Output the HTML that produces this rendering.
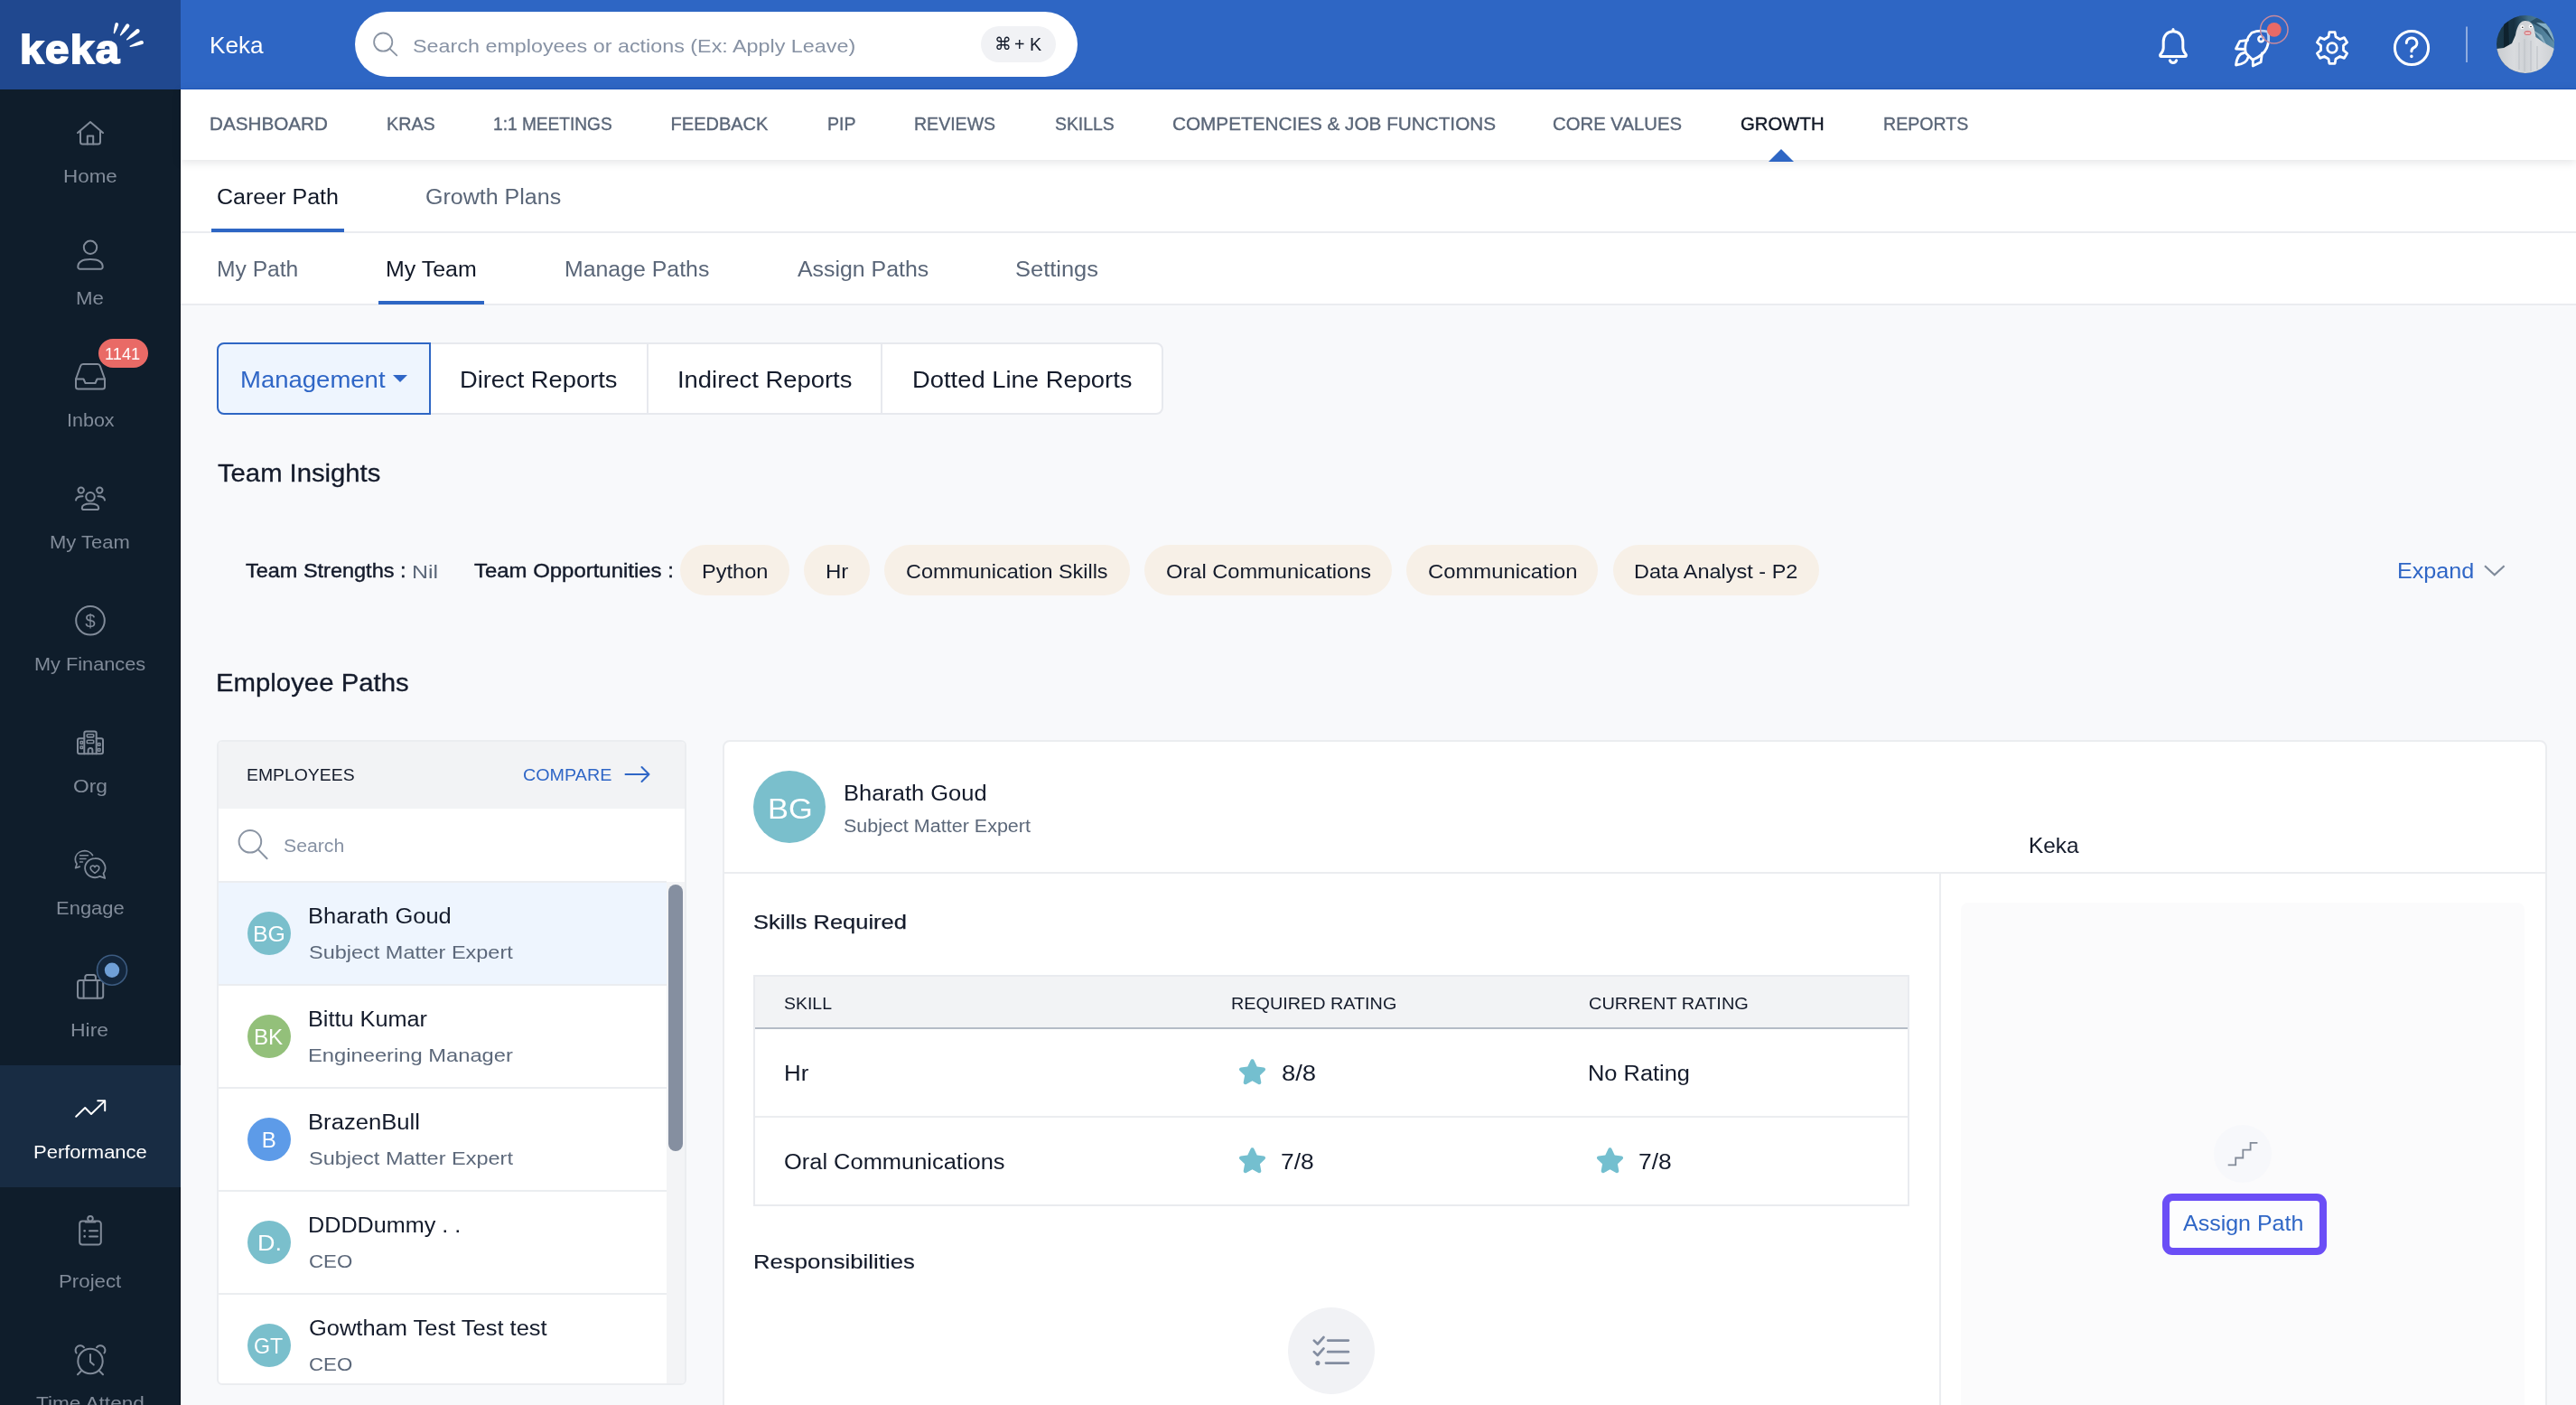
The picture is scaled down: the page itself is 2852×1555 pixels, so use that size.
<!DOCTYPE html>
<html lang="en"><head><meta charset="utf-8"><title>Keka - Career Path - My Team</title>
<style>
*{box-sizing:border-box}
html,body{margin:0;padding:0}
body{width:2852px;height:1555px;overflow:hidden;position:relative;background:#f8f9fb;font-family:"Liberation Sans","DejaVu Sans",sans-serif;color:#141b2b}
.t{position:absolute;line-height:1;white-space:nowrap;margin:0;font-weight:400;transform-origin:0 0}
.abs{position:absolute}
#app{position:absolute;left:0;top:0;width:2852px;height:1555px;overflow:hidden;will-change:transform}
svg{position:absolute;overflow:visible}
.side{position:absolute;left:0;top:0;width:200px;height:1555px;background:#0f1d2b;box-shadow:inset -1px 0 0 #050d18}
.logo{position:absolute;left:0;top:0;width:200px;height:99px;background:#20488f}
.side .act{position:absolute;left:0;top:1179px;width:200px;height:135px;background:#182c43}
.side svg{fill:none;stroke:#818b99;stroke-width:2;stroke-linecap:round;stroke-linejoin:round}
.top{position:absolute;left:200px;top:0;width:2652px;height:99px;background:#2e66c4;box-shadow:inset 0 -1px 0 #1d57c0}
.search{position:absolute;left:193px;top:13px;width:800px;height:72px;border-radius:36px;background:#fff}
.kbd{position:absolute;left:693px;top:16px;width:83px;height:40px;border-radius:20px;background:#f1f2f5}
.nav1{z-index:2;position:absolute;left:200px;top:99px;width:2652px;height:78px;background:#fff;box-shadow:0 2px 10px rgba(20,30,50,.13)}
.tabs2{position:absolute;left:200px;top:177px;width:2652px;height:81px;background:#fff;border-bottom:2px solid #eaecf0}
.tabs3{position:absolute;left:200px;top:258px;width:2652px;height:80px;background:#fff;border-bottom:2px solid #eaecf0}
.ul{position:absolute;height:4px;background:#2e66c4}
.seg{position:absolute;left:240px;top:379px;width:1048px;height:80px;border:2px solid #e7e9ee;border-radius:8px;background:#fff}
.seg i{position:absolute;top:0;width:2px;height:76px;background:#e7e9ee}
.seg .on{position:absolute;left:-2px;top:-2px;width:237px;height:80px;border:2px solid #2e66c4;border-radius:8px 0 0 8px;background:#eef5fe}
.chip{position:absolute;top:603px;height:56px;border-radius:28px;background:#f7f0e7}
.emp{position:absolute;left:240px;top:819px;width:520px;height:714px;border:2px solid #ebedf0;border-radius:6px;background:#fff;overflow:hidden}
.emp .hd{position:absolute;left:0;top:0;width:516px;height:74px;background:#f2f3f5}
.emp .row{position:absolute;left:0;width:496px;height:114px;border-top:2px solid #ebedf0}
.emp .row.sel{background:#eef5fe}
.emp .track{position:absolute;left:496px;top:155px;width:22px;height:560px;background:#f3f4f6}
.emp .thumb{position:absolute;left:498px;top:158px;width:16px;height:295px;border-radius:8px;background:#858fa0}
.av{position:absolute;border-radius:50%;background:#7abfcc}
.det{position:absolute;left:800px;top:819px;width:2020px;height:760px;border:2px solid #ebedf0;border-radius:8px;background:#fff}
.det .hline{position:absolute;left:0;top:144px;width:2016px;height:2px;background:#ebedf0}
.det .vline{position:absolute;left:1345px;top:146px;width:2px;height:620px;background:#ebedf0}
.det .box{position:absolute;left:1369px;top:178px;width:624px;height:600px;border-radius:8px;background:#fbfbfc}
.tbl{position:absolute;left:834px;top:1079px;width:1280px;height:256px;border:2px solid #e9ebef;background:#fff}
.tbl .th{position:absolute;left:0;top:0;width:1276px;height:58px;background:#f2f3f5;border-bottom:2px solid #b5bcc7}
.tbl .sep{position:absolute;left:0;top:154px;width:1276px;height:2px;background:#ebedf0}
.circ{position:absolute;border-radius:50%}
.btn{position:absolute;left:2402px;top:1329px;width:166px;height:52px;border-radius:4px;background:#fdfdfe;box-shadow:0 0 0 8px #6b4ef6}
</style></head>
<body><div id="app">
<aside class="side">
<div class="logo">
<span class="t" style="left:22.3px;top:32px;font-size:45px;font-weight:700;color:#fff;letter-spacing:1.4px;transform:scaleX(1.055);-webkit-text-stroke:1.8px #fff;paint-order:stroke fill;stroke-linejoin:round">keka</span>
<svg width="200" height="99" viewBox="0 0 200 99" style="left:0;top:0"><g fill="#fff" stroke="none"><path d="M127.1 36.7Q129.6 32.3 131.1 27.6A1.9 1.9 0 0 0 127.4 26.5Q126.0 31.2 125.7 36.3A0.7 0.7 0 0 0 127.1 36.7z"/><path d="M134.1 39.2Q139.0 34.9 142.9 29.9A2.2 2.2 0 0 0 139.4 27.2Q135.7 32.4 132.9 38.4A0.7 0.7 0 0 0 134.1 39.2z"/><path d="M140.8 44.4Q147.9 40.7 154.1 35.9A2.4 2.4 0 0 0 151.2 32.2Q145.1 37.2 140.0 43.4A0.7 0.7 0 0 0 140.8 44.4z"/><path d="M144.5 51.9Q151.2 51.0 157.5 49.1A2.1 2.1 0 0 0 156.1 45.1Q149.9 47.2 144.1 50.5A0.7 0.7 0 0 0 144.5 51.9z"/></g></svg>
</div>
<div class="act"></div>
<nav>
<svg width="200" height="1555" viewBox="0 0 200 1555" style="left:0;top:0">
<path d="M86 147L100 135L114 147"/><path d="M89 145.5V157a2.5 2.5 0 0 0 2.5 2.5h17a2.5 2.5 0 0 0 2.5 -2.5V145.5"/><path d="M96.8 159.5V150.5h6.4V159.5"/>
<circle cx="100" cy="273.8" r="7.2"/><path d="M86.3 295.5C86.3 289.5 92 287 100 287S113.7 289.5 113.7 295.5a2.3 2.3 0 0 1 -2.3 2.3H88.6a2.3 2.3 0 0 1 -2.3 -2.3z"/>
<path d="M84 419.5L89.2 405a3 3 0 0 1 2.8 -2h16a3 3 0 0 1 2.8 2L116 419.5V428a2.5 2.5 0 0 1 -2.5 2.5h-27A2.5 2.5 0 0 1 84 428z"/><path d="M84 419.5h8.5l2 4.5h11l2 -4.5H116"/>
<circle cx="100" cy="549.8" r="4.8"/><path d="M90.8 562.3C90.8 559 94.5 557.6 100 557.6s9.2 1.4 9.2 4.7a1.8 1.8 0 0 1 -1.8 1.8H92.6a1.8 1.8 0 0 1 -1.8 -1.8z"/><circle cx="89.7" cy="542.6" r="3.2"/><circle cx="110.3" cy="542.6" r="3.2"/><path d="M84 553.6C84.3 550.6 86.6 549.2 91.5 549.2"/><path d="M116 553.6C115.7 550.6 113.4 549.2 108.5 549.2"/>
<circle cx="100" cy="686.8" r="15.8"/>
<path d="M93.3 834.3V811.5a2 2 0 0 1 2 -2h9.4a2 2 0 0 1 2 2V834.3"/><path d="M93.3 817.2H88a2 2 0 0 0 -2 2V832.3a2 2 0 0 0 2 2H112a2 2 0 0 0 2 -2V819.2a2 2 0 0 0 -2 -2h-5.3"/><path d="M97.6 834.3V830.3a2.4 2.4 0 0 1 4.8 0V834.3"/><rect x="96.3" y="812.7" width="7.4" height="3.2" rx=".8" stroke-width="1.6"/><rect x="96.3" y="819.3" width="7.4" height="3.2" rx=".8" stroke-width="1.6"/><rect x="89" y="820.6" width="2.6" height="2.6" rx=".5" stroke-width="1.5"/><rect x="89" y="826" width="2.6" height="2.6" rx=".5" stroke-width="1.5"/><rect x="108.4" y="822.6" width="2.6" height="2.6" rx=".5" stroke-width="1.5"/><rect x="108.4" y="828.6" width="2.6" height="2.6" rx=".5" stroke-width="1.5"/>
<path d="M102.5 946.5A10.3 9.6 0 0 0 83.3 951c0 2 .7 3.8 1.8 5.3L83.6 960.7l4.6 -1.6" stroke-width="1.7"/><path d="M88.5 946.7h9M88.5 950.4h6.5M88.5 954h3" stroke-width="1.5"/><path d="M105 950.2a11 10.5 0 1 0 5.6 19.6l5.6 2.2l-1.7 -5.2A10.5 10.5 0 0 0 105 950.2z" stroke-width="1.8"/><path d="M105 966.3c-3 -2 -4.8 -3.6 -4.8 -5.6a2.5 2.5 0 0 1 4.8 -1a2.5 2.5 0 0 1 4.8 1c0 2 -1.8 3.6 -4.8 5.6z" stroke-width="1.6"/>
<rect x="86" y="1085" width="28.2" height="19.8" rx="2.5"/><path d="M94.3 1085V1081.3a2.2 2.2 0 0 1 2.2 -2.2h7.2a2.2 2.2 0 0 1 2.2 2.2V1085"/><path d="M92.6 1085V1104.8M107.8 1085V1104.8"/>
<circle cx="124" cy="1073.7" r="16.5" fill="#13263c" stroke="#3c5b80" stroke-width="1.6"/><circle cx="124" cy="1073.7" r="8.2" fill="#6f9fd6" stroke="none"/>
<g stroke="#fff"><path d="M84.2 1235.8L94.2 1226L101 1233L115.8 1218.6"/><path d="M108.2 1218.2H116.2V1229.2"/></g>
<path d="M96 1351.5H91.2a3 3 0 0 0 -3 3V1374.5a3 3 0 0 0 3 3H108.8a3 3 0 0 0 3 -3V1354.500a3 3 0 0 0 -3 -3H104"/><path d="M94.6 1352.6H105.4"/><circle cx="100" cy="1348.8" r="2.8"/><path d="M99 1362.3H108M99 1368.4H108"/><path d="M93.6 1362.3h.1M93.6 1368.4h.1" stroke-width="2.6"/>
<circle cx="100" cy="1506.5" r="13.7"/><path d="M100 1499V1507.3L103.8 1510.6"/><path d="M84.6 1497.5A5.2 5.2 0 0 1 93 1491.300"/><path d="M115.400 1497.5A5.2 5.2 0 0 0 107 1491.3"/><path d="M90 1517.2L86 1521.300M110 1517.2L114 1521.3"/>
</svg>
<svg width="40" height="40" style="left:80px;top:666px"><text x="20" y="27.8" text-anchor="middle" font-size="20.5" fill="#818b99" stroke="none" font-family="Liberation Sans, sans-serif">$</text></svg>
<div class="abs" style="left:109px;top:375px;width:55px;height:32px;border-radius:16px;background:#e96a66"></div>
<span class="t" style="left:116.4px;top:383px;font-size:18.5px;transform:scaleX(0.984);color:#fff;">1141</span>
<span class="t" style="left:69.6px;top:185px;font-size:20.5px;transform:scaleX(1.093);color:#818b99;">Home</span>
<span class="t" style="left:83.7px;top:320px;font-size:20.5px;transform:scaleX(1.086);color:#818b99;">Me</span>
<span class="t" style="left:73.8px;top:455px;font-size:20.5px;transform:scaleX(1.049);color:#818b99;">Inbox</span>
<span class="t" style="left:55.2px;top:590px;font-size:20.5px;transform:scaleX(1.072);color:#818b99;">My Team</span>
<span class="t" style="left:37.6px;top:725px;font-size:20.5px;transform:scaleX(1.060);color:#818b99;">My Finances</span>
<span class="t" style="left:81.1px;top:860px;font-size:20.5px;transform:scaleX(1.111);color:#818b99;">Org</span>
<span class="t" style="left:61.6px;top:995px;font-size:20.5px;transform:scaleX(1.072);color:#818b99;">Engage</span>
<span class="t" style="left:78.4px;top:1130px;font-size:20.5px;transform:scaleX(1.120);color:#818b99;">Hire</span>
<span class="t" style="left:36.6px;top:1265px;font-size:20.5px;transform:scaleX(1.072);color:#fff;">Performance</span>
<span class="t" style="left:64.8px;top:1408px;font-size:20.5px;transform:scaleX(1.086);color:#818b99;">Project</span>
<span class="t" style="left:40.4px;top:1543px;font-size:20.5px;transform:scaleX(1.104);color:#818b99;">Time Attend</span>
</nav></aside>
<header class="top">
<span class="t" style="left:31.6px;top:37px;font-size:26px;transform:scaleX(1.007);color:#fff;">Keka</span>
<div class="search">
<svg width="30" height="30" viewBox="410 32 30 30" style="left:17px;top:19px" fill="none" stroke="#8a94a3" stroke-width="1.8" stroke-linecap="round"><circle cx="424.2" cy="46.600" r="10.100"/><path d="M431.500 53.900L439.300 61.300"/></svg>
<span class="t" style="left:64.2px;top:27px;font-size:21px;transform:scaleX(1.111);color:#8792a4;">Search employees or actions (Ex: Apply Leave)</span>
<div class="kbd">
<span class="t" style="left:15px;top:9.500px;font-size:19px;font-family:'DejaVu Sans',sans-serif;color:#141b2b">&#8984;</span>
<span class="t" style="left:36.6px;top:10px;font-size:20px;transform:scaleX(0.985);color:#141b2b;">+ K</span>
</div></div>
<svg width="460" height="99" viewBox="2380 0 460 99" style="left:2180px;top:0" fill="none" stroke="#fff" stroke-width="3" stroke-linecap="round" stroke-linejoin="round">
<path d="M2406 32.5V34.5"/><path d="M2406 34.8c-6.600 0 -10.800 4.800 -10.800 11.500V53c0 3 -1.500 5.200 -3.300 7.300c-.8 1 -.2 2.300 1.100 2.300H2419c1.300 0 1.900 -1.300 1.100 -2.300c-1.800 -2.100 -3.300 -4.300 -3.300 -7.300V46.300c0 -6.700 -4.200 -11.500 -10.800 -11.500z"/><path d="M2402.300 66.800a3.900 3.900 0 0 0 7.400 0"/>
<path d="M2493 36.200c6.500 -2.600 12.500 -2.400 17.800 -1.100c1.300 5.300 1.500 11.300 -1.100 17.800c-2.700 6.300 -8.700 10.500 -15.700 13.300l-7.300 -7.300c-2.800 -7 1 -17.500 6.300 -22.700z" stroke-width="2.800"/><circle cx="2503.300" cy="43.200" r="2.900" stroke-width="2.600"/><path d="M2488.500 44.500l-8.700 1.200l-4.300 8.300l9.800 .5" stroke-width="2.800"/><path d="M2494.300 66v7l8.800 -4.300l1.300 -9.700" stroke-width="2.800"/><path d="M2484.500 58.500c-5.500 .5 -8 5 -9 13.500c8.500 -1 12.500 -3.500 13.500 -8.800" stroke-width="2.800"/>
<circle cx="2517.800" cy="32.800" r="15.200" fill="rgba(46,102,196,.3)" stroke="#c98a9d" stroke-width="1.500"/><circle cx="2517.800" cy="32.800" r="7.900" fill="#e96a66" stroke="none"/>
<path d="M2578.9 35.7L2585.1 35.7L2586.0 40.8L2590.6 43.5L2595.4 41.6L2598.6 47.0L2594.5 50.3L2594.5 55.7L2598.6 59.0L2595.4 64.4L2590.6 62.5L2586.0 65.2L2585.1 70.3L2578.9 70.3L2578.0 65.2L2573.4 62.5L2568.6 64.4L2565.4 59.0L2569.5 55.7L2569.5 50.3L2565.4 47.0L2568.6 41.6L2573.4 43.5L2578.0 40.8z" stroke-width="2.800"/><circle cx="2582" cy="53" r="5.300" stroke-width="2.800"/>
<circle cx="2670" cy="53" r="18.600"/><path d="M2664.300 47.500a5.800 5.600 0 1 1 8.300 5.100c-1.900 1 -2.700 2 -2.700 4.200"/><path d="M2669.900 62.300v.2" stroke-width="3.400"/>
<path d="M2731 29.500V69" stroke="#8facdf" stroke-width="2" stroke-linecap="butt"/>
</svg>
<svg width="64" height="64" viewBox="0 0 64 64" style="left:2564px;top:17px"><defs><clipPath id="avc"><circle cx="32" cy="32" r="32"/></clipPath><linearGradient id="avb" x1="0" y1="0" x2="1" y2="0"><stop offset="0" stop-color="#1b3a4d"/><stop offset=".3" stop-color="#17303f"/><stop offset=".55" stop-color="#3f6c86"/><stop offset="1" stop-color="#5f8fa9"/></linearGradient><linearGradient id="avg" x1="0" y1="0" x2="1" y2="0"><stop offset="0" stop-color="#c9ccd0"/><stop offset=".3" stop-color="#d9dbde"/><stop offset=".5" stop-color="#cfd2d6"/><stop offset=".7" stop-color="#dcdee1"/><stop offset="1" stop-color="#cdd0d4"/></linearGradient></defs><g clip-path="url(#avc)"><rect width="64" height="64" fill="url(#avb)"/><path d="M8 0h5l1 38h-6z" fill="#0f222e"/><path d="M22 0L34 9L44 3L64 0V30L50 14z" fill="#2a5068"/><path d="M44 8l12 8l8 14V10z" fill="#86b0c6"/><path d="M40 16l10 6l6 12z" fill="#a5c6d6" opacity=".7"/><path d="M0 37L8 36L17 31L21 22C23 10 27 6 32 6S40 9 41.500 14L43.500 24L52 30L64 37V64H0z" fill="url(#avg)"/><path d="M25 30v30M31 26v36M38 28v34M45 34v26" stroke="#bfc3c8" stroke-width="1.200" fill="none"/><circle cx="28.500" cy="13.100" r="2.100" fill="#fff"/><circle cx="37.900" cy="12.300" r="2.100" fill="#fff"/><circle cx="28.800" cy="13.300" r=".8" fill="#222"/><circle cx="38" cy="12.500" r=".8" fill="#222"/><ellipse cx="34.500" cy="19.400" rx="4" ry="2.600" fill="#d8858a"/><rect x="32" y="19" width="5" height="1.300" fill="#f3e6e6"/></g></svg>
</header>
<nav class="nav1">
<a class="t" style="left:32.2px;top:28px;font-size:20px;transform:scaleX(1.033);color:#5a6678;-webkit-text-stroke:0.35px;">DASHBOARD</a>
<a class="t" style="left:228.3px;top:28px;font-size:20px;transform:scaleX(0.987);color:#5a6678;-webkit-text-stroke:0.35px;">KRAS</a>
<a class="t" style="left:346.3px;top:28px;font-size:20px;transform:scaleX(0.956);color:#5a6678;-webkit-text-stroke:0.35px;">1:1 MEETINGS</a>
<a class="t" style="left:542.6px;top:28px;font-size:20px;color:#5a6678;-webkit-text-stroke:0.35px;">FEEDBACK</a>
<a class="t" style="left:715.9px;top:28px;font-size:20px;transform:scaleX(0.979);color:#5a6678;-webkit-text-stroke:0.35px;">PIP</a>
<a class="t" style="left:812.3px;top:28px;font-size:20px;transform:scaleX(0.977);color:#5a6678;-webkit-text-stroke:0.35px;">REVIEWS</a>
<a class="t" style="left:968.1px;top:28px;font-size:20px;transform:scaleX(0.968);color:#5a6678;-webkit-text-stroke:0.35px;">SKILLS</a>
<a class="t" style="left:1098.0px;top:28px;font-size:20px;transform:scaleX(1.036);color:#5a6678;-webkit-text-stroke:0.35px;">COMPETENCIES &amp; JOB FUNCTIONS</a>
<a class="t" style="left:1519.2px;top:28px;font-size:20px;transform:scaleX(1.016);color:#5a6678;-webkit-text-stroke:0.35px;">CORE VALUES</a>
<a class="t" style="left:1727.0px;top:28px;font-size:20px;transform:scaleX(1.017);color:#111827;-webkit-text-stroke:0.4px;">GROWTH</a>
<a class="t" style="left:1885.0px;top:28px;font-size:20px;transform:scaleX(0.979);color:#5a6678;-webkit-text-stroke:0.35px;">REPORTS</a>
<svg width="28" height="14" viewBox="0 0 28 14" style="left:1757.700px;top:65.500px"><path d="M0 14L14 0L28 14z" fill="#2e66c4"/></svg>
</nav>
<div class="tabs2">
<a class="t" style="left:40.0px;top:30px;font-size:23px;transform:scaleX(1.088);color:#111827;">Career Path</a>
<a class="t" style="left:271.1px;top:30px;font-size:23px;transform:scaleX(1.088);color:#5a6678;">Growth Plans</a>
<div class="ul" style="left:34px;top:76px;width:147px"></div>
</div>
<div class="tabs3">
<a class="t" style="left:40.1px;top:29px;font-size:23px;transform:scaleX(1.070);color:#5a6678;">My Path</a>
<a class="t" style="left:227.2px;top:29px;font-size:23px;transform:scaleX(1.084);color:#111827;">My Team</a>
<a class="t" style="left:424.9px;top:29px;font-size:23px;transform:scaleX(1.081);color:#5a6678;">Manage Paths</a>
<a class="t" style="left:682.7px;top:29px;font-size:23px;transform:scaleX(1.082);color:#5a6678;">Assign Paths</a>
<a class="t" style="left:923.5px;top:29px;font-size:23px;transform:scaleX(1.107);color:#5a6678;">Settings</a>
<div class="ul" style="left:219px;top:75px;width:117px"></div>
</div>
<main>
<div class="seg"><div class="on"></div><i style="left:473.6px"></i><i style="left:732.6px"></i></div>
<span class="t" style="left:266.4px;top:407px;font-size:26px;transform:scaleX(1.058);color:#2f66c6;">Management</span>
<svg width="16" height="8" viewBox="0 0 16 8" style="left:435px;top:415px"><path d="M0 0H16L8 8z" fill="#2f66c6"/></svg>
<span class="t" style="left:509.1px;top:407px;font-size:26px;transform:scaleX(1.050);color:#141b2b;">Direct Reports</span>
<span class="t" style="left:749.8px;top:407px;font-size:26px;transform:scaleX(1.054);color:#141b2b;">Indirect Reports</span>
<span class="t" style="left:1010.0px;top:407px;font-size:26px;transform:scaleX(1.053);color:#141b2b;">Dotted Line Reports</span>
<h2 class="t" style="left:240.5px;top:510px;font-size:27.5px;transform:scaleX(1.063);color:#141b2b;-webkit-text-stroke:0.3px;">Team Insights</h2>
<span class="t" style="left:272.3px;top:622px;font-size:21.5px;transform:scaleX(1.092);color:#141b2b;-webkit-text-stroke:0.4px;">Team Strengths :</span>
<span class="t" style="left:456.0px;top:622px;font-size:21px;transform:scaleX(1.186);color:#5c687a;">Nil</span>
<span class="t" style="left:525.4px;top:622px;font-size:21.5px;transform:scaleX(1.113);color:#141b2b;-webkit-text-stroke:0.4px;">Team Opportunities :</span>
<div class="chip" style="left:753px;width:121px"></div>
<span class="t" style="left:776.5px;top:622px;font-size:22px;transform:scaleX(1.073);color:#141b2b;">Python</span>
<div class="chip" style="left:890px;width:73px"></div>
<span class="t" style="left:913.6px;top:622px;font-size:22px;transform:scaleX(1.092);color:#141b2b;">Hr</span>
<div class="chip" style="left:979px;width:272px"></div>
<span class="t" style="left:1003.1px;top:622px;font-size:22px;transform:scaleX(1.063);color:#141b2b;">Communication Skills</span>
<div class="chip" style="left:1267px;width:274px"></div>
<span class="t" style="left:1290.6px;top:622px;font-size:22px;transform:scaleX(1.074);color:#141b2b;">Oral Communications</span>
<div class="chip" style="left:1557px;width:212px"></div>
<span class="t" style="left:1581.0px;top:622px;font-size:22px;transform:scaleX(1.083);color:#141b2b;">Communication</span>
<div class="chip" style="left:1786px;width:228px"></div>
<span class="t" style="left:1808.6px;top:622px;font-size:22px;transform:scaleX(1.067);color:#141b2b;">Data Analyst - P2</span>
<span class="t" style="left:2654.4px;top:620px;font-size:24.5px;transform:scaleX(1.027);color:#2f66c6;">Expand</span>
<svg width="24" height="14" viewBox="0 0 24 14" style="left:2750px;top:624.5px" fill="none" stroke="#7f8a9a" stroke-width="2.2" stroke-linecap="butt" stroke-linejoin="miter"><path d="M1 1.200L11.800 11.200L22.600 1.200"/></svg>
<h2 class="t" style="left:239.1px;top:742px;font-size:27.5px;transform:scaleX(1.067);color:#141b2b;-webkit-text-stroke:0.3px;">Employee Paths</h2>
<section class="emp">
<div class="hd"></div>
<span class="t" style="left:30.9px;top:28px;font-size:18px;transform:scaleX(1.077);color:#141b2b;">EMPLOYEES</span>
<span class="t" style="left:337.0px;top:28px;font-size:18px;transform:scaleX(1.096);color:#2f66c6;">COMPARE</span>
<svg width="30" height="20" viewBox="0 0 30 20" style="left:449px;top:26px" fill="none" stroke="#2f66c6" stroke-width="2" stroke-linecap="round" stroke-linejoin="round"><path d="M1.500 10H27.500M19.500 2L27.500 10L19.500 18"/></svg>
<svg width="40" height="40" viewBox="260 915 40 40" style="left:18px;top:94px" fill="none" stroke="#8a94a3" stroke-width="2" stroke-linecap="round"><circle cx="276.900" cy="931.300" r="12.300"/><path d="M285.700 940.100L295.600 950.300"/></svg>
<span class="t" style="left:71.9px;top:105px;font-size:20px;transform:scaleX(1.061);color:#8792a4;">Search</span>
<div class="row sel" style="top:154px"></div>
<div class="av" style="left:32px;top:188px;width:48px;height:48px;background:#7abfcc"></div>
<span class="t" style="left:38.2px;top:201px;font-size:24px;transform:scaleX(1.034);color:#fff;">BG</span>
<span class="t" style="left:99.3px;top:182px;font-size:23.5px;transform:scaleX(1.085);color:#141b2b;">Bharath Goud</span>
<span class="t" style="left:100.1px;top:222px;font-size:21px;transform:scaleX(1.118);color:#5c687a;">Subject Matter Expert</span>
<div class="row" style="top:268px"></div>
<div class="av" style="left:32px;top:302px;width:48px;height:48px;background:#93c07a"></div>
<span class="t" style="left:39.0px;top:315px;font-size:24px;transform:scaleX(1.006);color:#fff;">BK</span>
<span class="t" style="left:99.3px;top:296px;font-size:23.5px;transform:scaleX(1.075);color:#141b2b;">Bittu Kumar</span>
<span class="t" style="left:99.2px;top:336px;font-size:21px;transform:scaleX(1.130);color:#5c687a;">Engineering Manager</span>
<div class="row" style="top:382px"></div>
<div class="av" style="left:32px;top:416px;width:48px;height:48px;background:#5d9be8"></div>
<span class="t" style="left:47.8px;top:429px;font-size:24px;color:#fff;">B</span>
<span class="t" style="left:99.3px;top:410px;font-size:23.5px;transform:scaleX(1.091);color:#141b2b;">BrazenBull</span>
<span class="t" style="left:100.1px;top:450px;font-size:21px;transform:scaleX(1.119);color:#5c687a;">Subject Matter Expert</span>
<div class="row" style="top:496px"></div>
<div class="av" style="left:32px;top:530px;width:48px;height:48px;background:#7abfcc"></div>
<span class="t" style="left:43.1px;top:543px;font-size:24px;transform:scaleX(1.122);color:#fff;">D.</span>
<span class="t" style="left:99.3px;top:524px;font-size:23.5px;transform:scaleX(1.072);color:#141b2b;">DDDDummy . .</span>
<span class="t" style="left:100.0px;top:564px;font-size:21px;transform:scaleX(1.060);color:#5c687a;">CEO</span>
<div class="row" style="top:610px"></div>
<div class="av" style="left:32px;top:644px;width:48px;height:48px;background:#7abfcc"></div>
<span class="t" style="left:39.3px;top:657px;font-size:24px;transform:scaleX(0.966);color:#fff;">GT</span>
<span class="t" style="left:100.2px;top:638px;font-size:23.5px;transform:scaleX(1.083);color:#141b2b;">Gowtham Test Test test</span>
<span class="t" style="left:100.0px;top:678px;font-size:21px;transform:scaleX(1.060);color:#5c687a;">CEO</span>
<div class="track"></div><div class="thumb"></div>
</section>
<section class="det">
<div class="hline"></div><div class="vline"></div><div class="box"></div>
<div class="av" style="left:32px;top:32px;width:80px;height:80px"></div>
<span class="t" style="left:47.7px;top:58px;font-size:32px;transform:scaleX(1.076);color:#fff;">BG</span>
<span class="t" style="left:131.5px;top:46px;font-size:23.5px;transform:scaleX(1.084);color:#141b2b;">Bharath Goud</span>
<span class="t" style="left:132.1px;top:84px;font-size:19.5px;transform:scaleX(1.104);color:#5c687a;">Subject Matter Expert</span>
<span class="t" style="left:1443.5px;top:103px;font-size:24px;transform:scaleX(1.017);color:#141b2b;">Keka</span>
</section>
<h3 class="t" style="left:833.9px;top:1010px;font-size:22.5px;transform:scaleX(1.132);color:#141b2b;-webkit-text-stroke:0.25px;">Skills Required</h3>
<div class="tbl"><div class="th"></div><div class="sep"></div></div>
<span class="t" style="left:868.2px;top:1102px;font-size:18.5px;transform:scaleX(1.051);color:#141b2b;">SKILL</span>
<span class="t" style="left:1363.2px;top:1102px;font-size:18.5px;transform:scaleX(1.070);color:#141b2b;">REQUIRED RATING</span>
<span class="t" style="left:1758.6px;top:1102px;font-size:18.5px;transform:scaleX(1.080);color:#141b2b;">CURRENT RATING</span>
<span class="t" style="left:867.7px;top:1177px;font-size:23px;transform:scaleX(1.127);color:#141b2b;">Hr</span>
<span class="t" style="left:867.9px;top:1275px;font-size:23px;transform:scaleX(1.106);color:#141b2b;">Oral Communications</span>
<svg width="31" height="30" viewBox="0 0 30 30" style="left:1371.4px;top:1171.2px"><path d="M15 1.200c.9 0 1.500 .5 1.900 1.300l3.300 6.900l7.500 1c1.800 .3 2.500 2.300 1.200 3.600l-5.500 5.200l1.400 7.500c.3 1.800 -1.500 3 -3.100 2.200L15 25.300l-6.700 3.600c-1.600 .800 -3.400 -.4 -3.100 -2.200l1.400 -7.500l-5.500 -5.200c-1.300 -1.300 -.6 -3.300 1.200 -3.600l7.500 -1l3.300 -6.900c.4 -.800 1 -1.300 1.900 -1.300z" fill="#74bfcf"/></svg>
<span class="t" style="left:1418.5px;top:1177px;font-size:23.5px;transform:scaleX(1.167);color:#141b2b;">8/8</span>
<span class="t" style="left:1757.9px;top:1177px;font-size:23.5px;transform:scaleX(1.081);color:#141b2b;">No Rating</span>
<svg width="31" height="30" viewBox="0 0 30 30" style="left:1371.4px;top:1269.2px"><path d="M15 1.200c.9 0 1.500 .5 1.900 1.300l3.300 6.900l7.500 1c1.800 .3 2.500 2.300 1.200 3.600l-5.500 5.200l1.400 7.500c.3 1.800 -1.500 3 -3.100 2.200L15 25.300l-6.700 3.600c-1.600 .800 -3.400 -.4 -3.100 -2.200l1.400 -7.500l-5.500 -5.200c-1.300 -1.300 -.6 -3.300 1.200 -3.600l7.500 -1l3.300 -6.900c.4 -.800 1 -1.300 1.900 -1.300z" fill="#74bfcf"/></svg>
<span class="t" style="left:1418.0px;top:1275px;font-size:23.5px;transform:scaleX(1.122);color:#141b2b;">7/8</span>
<svg width="31" height="30" viewBox="0 0 30 30" style="left:1767.4px;top:1269.4px"><path d="M15 1.200c.9 0 1.500 .5 1.900 1.300l3.300 6.900l7.500 1c1.800 .3 2.500 2.300 1.200 3.600l-5.500 5.200l1.400 7.500c.3 1.800 -1.500 3 -3.100 2.200L15 25.300l-6.700 3.600c-1.600 .800 -3.400 -.4 -3.100 -2.200l1.400 -7.500l-5.500 -5.200c-1.300 -1.300 -.6 -3.300 1.200 -3.600l7.500 -1l3.300 -6.900c.4 -.800 1 -1.300 1.900 -1.300z" fill="#74bfcf"/></svg>
<span class="t" style="left:1814.0px;top:1275px;font-size:23.5px;transform:scaleX(1.125);color:#141b2b;">7/8</span>
<h3 class="t" style="left:833.5px;top:1386px;font-size:22.5px;transform:scaleX(1.144);color:#141b2b;-webkit-text-stroke:0.15px;">Responsibilities</h3>
<div class="circ" style="left:1426px;top:1447px;width:96px;height:96px;background:#f1f2f5"></div>
<svg width="50" height="40" viewBox="1450 1475 50 40" style="left:1450px;top:1475px" fill="none" stroke="#838da0" stroke-width="2.700" stroke-linecap="round" stroke-linejoin="round"><path d="M1454.800 1483.600L1458.800 1487.500L1465.500 1480"/><path d="M1470.200 1483.600H1492.800"/><path d="M1454.800 1496.100L1458.800 1500L1465.500 1492.400"/><path d="M1470.200 1496.200H1492.800"/><circle cx="1458.900" cy="1508.600" r="1.200" fill="#838da0"/><path d="M1468 1508.600H1492.800"/></svg>
<div class="circ" style="left:2451px;top:1245px;width:64px;height:64px;background:#f7f8fb"></div>
<svg width="40" height="32" viewBox="2464 1260 40 32" style="left:2464px;top:1260px" fill="none" stroke="#838b99" stroke-width="1.800"><path d="M2466.700 1289.300H2475.200V1281.500H2483.300V1272.700H2491.600V1264.900H2499.400"/></svg>
<div class="btn"></div>
<span class="t" style="left:2416.8px;top:1342px;font-size:24.3px;transform:scaleX(1.028);color:#2f66c6;">Assign Path</span>
</main>
</div></body></html>
